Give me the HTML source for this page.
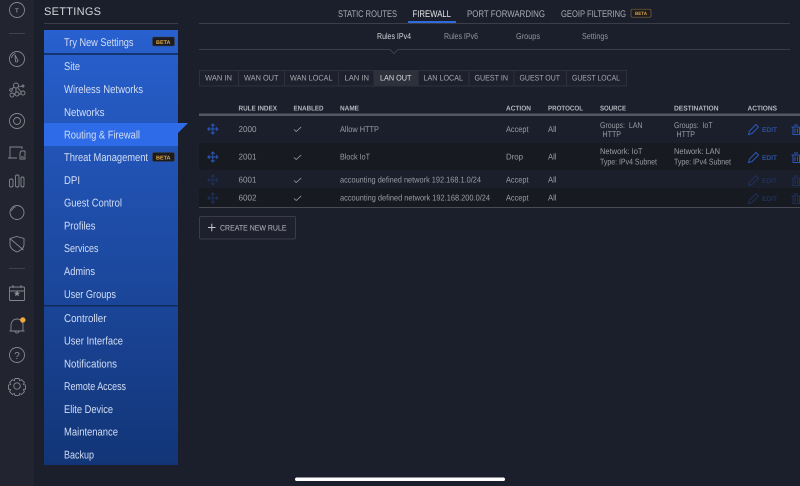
<!DOCTYPE html>
<html><head><meta charset="utf-8"><style>
html,body{margin:0;padding:0;background:#1b1e2b;width:800px;height:486px;overflow:hidden}
svg{display:block}
text{font-family:"Liberation Sans",sans-serif}
.m{font-size:11.2px;fill:#d3def5}
.t{font-size:9.6px;fill:#a9acb3}
.h{font-size:7px;font-weight:bold;fill:#b4b7bd}
.b{font-size:8px;fill:#a4a7ae}
.r{font-size:8.4px;fill:#9a9da4}
.i{fill:none;stroke:#85888f;stroke-width:.9}
.bl{fill:none;stroke:#2a58b8;stroke-width:1}
.bd{fill:none;stroke:#1e3159;stroke-width:1}
</style></head><body>
<svg width="800" height="486" viewBox="0 0 800 486" xmlns="http://www.w3.org/2000/svg" text-rendering="geometricPrecision">
<defs>
<linearGradient id="g" gradientUnits="userSpaceOnUse" x1="0" y1="30" x2="0" y2="465"><stop offset="0" stop-color="#2860cf"/><stop offset="1" stop-color="#123577"/></linearGradient>
</defs>
<rect width="800" height="486" fill="#1b1e2b"/>
<rect width="34" height="486" fill="#22252f"/>

<!-- left rail -->
<g class="i">
<circle cx="17" cy="10" r="7.5"/>
<path d="M9 33.500H25" stroke="#44474f"/>
<circle cx="17" cy="59" r="7.500"/><path d="M15 55l3 5.500a1.500 1.500 0 0 1-2.500 1zM11.500 58a6 6 0 0 1 4-4.500"/>
<circle cx="16" cy="85.500" r="2.500"/><circle cx="12" cy="95" r="2"/><circle cx="17" cy="94" r="2"/><circle cx="23" cy="93" r="2"/><circle cx="11" cy="90" r="1.300"/><circle cx="23" cy="86" r="1"/><path d="M16 88v4M14 94h1M19 94h2M14 87l-2 2M18 87l4-1M18 88l3 4"/>
<circle cx="17" cy="121" r="7.500"/><circle cx="17" cy="121" r="3.500"/>
<path d="M10 158v-11h12v2M8 158h9M21 151h4v8h-5v-6zM21 157h3"/>
<rect x="9.500" y="179" width="3.500" height="8" rx="1.500"/><rect x="15.500" y="175" width="3.500" height="12" rx="1.500"/><rect x="21" y="177" width="3" height="10" rx="1.500"/>
<circle cx="17" cy="212.500" r="7"/><path d="M11.500 211a6 6 0 0 1 4-4"/>
<path d="M17 236.500l7 2v6c0 3.500-3.500 6-7 7.500-3.500-1.500-7-4-7-7.500v-6zM10.500 239l13 11" />
<path d="M9 268.500H25" stroke="#44474f"/>
<rect x="9.500" y="287" width="15" height="13.500" rx="1"/><path d="M9.500 291h15M13 285v3M21 285v3"/>
<path d="M11 331v-6a6 6 0 0 1 12 0v6M9.500 331h15M15 331a2 2 0 0 0 4 0"/>
<circle cx="17" cy="355" r="7.500"/>
<circle cx="17" cy="386" r="3.200"/>
<path d="M15 378.500h4l.6 2.100 2-.9 2.800 2.800-1 2 2.100.6v4l-2.100.6 1 2-2.800 2.800-2-1-.6 2.100h-4l-.6-2.100-2 1-2.800-2.800 1-2-2.100-.6v-4l2.100-.6-1-2 2.800-2.800 2 .9z"/>
</g>
<text x="15" y="12.500" font-size="6" font-weight="bold" fill="#8b8e98">T</text>
<text x="14.300" y="358.800" font-size="10" fill="#8b8e98">?</text>
<path d="M17 290.500l.9 2 2.100.2-1.600 1.400.5 2.100-1.900-1.100-1.900 1.100.5-2.100-1.600-1.400 2.100-.2z" fill="#8b8e98"/>
<circle cx="22.800" cy="320" r="2.700" fill="#f0a93a"/>

<!-- settings menu -->
<text x="44" y="15" font-size="11" fill="#d5d7db" textLength="57" lengthAdjust="spacing">SETTINGS</text>
<rect x="44" y="23" width="134" height="1" fill="#3a3d46"/>
<rect x="44" y="30" width="134" height="435" fill="url(#g)"/>
<rect x="44" y="53" width="134" height="2" fill="#143470"/>
<rect x="44" y="305" width="134" height="1.500" fill="#102a5c"/>
<path d="M44 123H188L178 133V146H44z" fill="#2d6be8"/>

<g class="m">
<text x="64" y="45.800" textLength="69.500" lengthAdjust="spacingAndGlyphs">Try New Settings</text>
<text x="64" y="69.800" textLength="16" lengthAdjust="spacingAndGlyphs">Site</text>
<text x="64" y="92.800" textLength="79" lengthAdjust="spacingAndGlyphs">Wireless Networks</text>
<text x="64" y="115.800" textLength="40.500" lengthAdjust="spacingAndGlyphs">Networks</text>
<text x="64" y="138.300" textLength="76" lengthAdjust="spacingAndGlyphs">Routing &amp; Firewall</text>
<text x="64" y="160.800" textLength="84" lengthAdjust="spacingAndGlyphs">Threat Management</text>
<text x="64" y="183.800" textLength="16" lengthAdjust="spacingAndGlyphs">DPI</text>
<text x="64" y="206.300" textLength="58" lengthAdjust="spacingAndGlyphs">Guest Control</text>
<text x="64" y="229.300" textLength="31.500" lengthAdjust="spacingAndGlyphs">Profiles</text>
<text x="64" y="251.800" textLength="34.500" lengthAdjust="spacingAndGlyphs">Services</text>
<text x="64" y="274.800" textLength="31" lengthAdjust="spacingAndGlyphs">Admins</text>
<text x="64" y="297.800" textLength="52" lengthAdjust="spacingAndGlyphs">User Groups</text>
<text x="64" y="321.800" textLength="42.500" lengthAdjust="spacingAndGlyphs">Controller</text>
<text x="64" y="344.300" textLength="59" lengthAdjust="spacingAndGlyphs">User Interface</text>
<text x="64" y="367.300" textLength="53" lengthAdjust="spacingAndGlyphs">Notifications</text>
<text x="64" y="389.800" textLength="62" lengthAdjust="spacingAndGlyphs">Remote Access</text>
<text x="64" y="412.800" textLength="49" lengthAdjust="spacingAndGlyphs">Elite Device</text>
<text x="64" y="435.300" textLength="54" lengthAdjust="spacingAndGlyphs">Maintenance</text>
<text x="64" y="458.300" textLength="30" lengthAdjust="spacingAndGlyphs">Backup</text>
</g>
<rect x="152.500" y="37" width="22" height="9" rx="1.500" fill="#1b1c22" stroke="#3c3f4a" stroke-width=".6"/>
<text x="156" y="44" font-size="5.500" font-weight="bold" fill="#e0a840" textLength="14.500" lengthAdjust="spacingAndGlyphs">BETA</text>
<rect x="152.500" y="152.500" width="22" height="9" rx="1.500" fill="#1b1c22" stroke="#3c3f4a" stroke-width=".6"/>
<text x="156" y="159.500" font-size="5.500" font-weight="bold" fill="#e0a840" textLength="14.500" lengthAdjust="spacingAndGlyphs">BETA</text>

<!-- top tabs -->
<g class="t">
<text x="338" y="16.800" textLength="59" lengthAdjust="spacingAndGlyphs">STATIC ROUTES</text>
<text x="412.500" y="16.800" textLength="38.500" lengthAdjust="spacingAndGlyphs" style="fill:#e4e5e8">FIREWALL</text>
<text x="467" y="16.800" textLength="78" lengthAdjust="spacingAndGlyphs">PORT FORWARDING</text>
<text x="561" y="16.800" textLength="65" lengthAdjust="spacingAndGlyphs">GEOIP FILTERING</text>
</g>
<rect x="631" y="9.200" width="20" height="8" rx="1.500" fill="#1d1c1f" stroke="#7d6537" stroke-width=".7"/>
<text x="635" y="15" font-size="4.800" font-weight="bold" fill="#d9a544" textLength="12" lengthAdjust="spacingAndGlyphs">BETA</text>
<rect x="199" y="23" width="591" height="1" fill="#3b3e47"/>
<rect x="408" y="21" width="48" height="2" fill="#2f6bdc"/>

<!-- sub tabs -->
<text x="377" y="38.800" font-size="8.600" fill="#d5d6da" textLength="34" lengthAdjust="spacingAndGlyphs">Rules IPv4</text>
<text x="444" y="38.800" font-size="8.600" fill="#92959c" textLength="34" lengthAdjust="spacingAndGlyphs">Rules IPv6</text>
<text x="516" y="38.800" font-size="8.600" fill="#92959c" textLength="24" lengthAdjust="spacingAndGlyphs">Groups</text>
<text x="582" y="38.800" font-size="8.600" fill="#92959c" textLength="26" lengthAdjust="spacingAndGlyphs">Settings</text>
<path d="M199 49.500H390L394 53.500 398 49.500H790" fill="none" stroke="#3b3e47"/>

<!-- button group -->
<rect x="199.500" y="70.500" width="427" height="15.500" fill="#1e212d" stroke="#2e313c"/>
<rect x="374" y="70" width="44" height="16" fill="#2e313c"/>
<path d="M238.500 70.500v16M284.500 70.500v16M338.500 70.500v16M374 70.500v16M418 70.500v16M469 70.500v16M514 70.500v16M566.500 70.500v16" stroke="#2e313c" fill="none"/>
<g class="b">
<text x="205" y="80.700" textLength="27" lengthAdjust="spacingAndGlyphs">WAN IN</text>
<text x="244" y="80.700" textLength="34.500" lengthAdjust="spacingAndGlyphs">WAN OUT</text>
<text x="290" y="80.700" textLength="42.500" lengthAdjust="spacingAndGlyphs">WAN LOCAL</text>
<text x="344.500" y="80.700" textLength="24.500" lengthAdjust="spacingAndGlyphs">LAN IN</text>
<text x="380" y="80.700" textLength="31.500" lengthAdjust="spacingAndGlyphs" style="fill:#d8d9dd">LAN OUT</text>
<text x="423.500" y="80.700" textLength="39.500" lengthAdjust="spacingAndGlyphs">LAN LOCAL</text>
<text x="474.500" y="80.700" textLength="33.500" lengthAdjust="spacingAndGlyphs">GUEST IN</text>
<text x="519.500" y="80.700" textLength="40.500" lengthAdjust="spacingAndGlyphs">GUEST OUT</text>
<text x="572" y="80.700" textLength="48" lengthAdjust="spacingAndGlyphs">GUEST LOCAL</text>
</g>

<!-- table -->
<g class="h">
<text x="238.500" y="110.500" textLength="38.500" lengthAdjust="spacingAndGlyphs">RULE INDEX</text>
<text x="293.500" y="110.500" textLength="30" lengthAdjust="spacingAndGlyphs">ENABLED</text>
<text x="340" y="110.500" textLength="19" lengthAdjust="spacingAndGlyphs">NAME</text>
<text x="506" y="110.500" textLength="25" lengthAdjust="spacingAndGlyphs">ACTION</text>
<text x="548" y="110.500" textLength="35" lengthAdjust="spacingAndGlyphs">PROTOCOL</text>
<text x="600" y="110.500" textLength="26" lengthAdjust="spacingAndGlyphs">SOURCE</text>
<text x="674" y="110.500" textLength="44.500" lengthAdjust="spacingAndGlyphs">DESTINATION</text>
<text x="747.500" y="110.500" textLength="29.500" lengthAdjust="spacingAndGlyphs">ACTIONS</text>
</g>
<rect x="199" y="113.500" width="601" height="2.500" fill="#545862"/>
<rect x="199" y="143" width="601" height="27" fill="#181a21"/>
<rect x="199" y="188" width="601" height="19" fill="#181a21"/>
<rect x="199" y="207" width="601" height="1" fill="#484b55"/>

<g class="r">
<text x="238.500" y="132.200" textLength="18" lengthAdjust="spacingAndGlyphs">2000</text>
<text x="238.500" y="159.700" textLength="18" lengthAdjust="spacingAndGlyphs">2001</text>
<text x="238.500" y="182.700" textLength="18" lengthAdjust="spacingAndGlyphs">6001</text>
<text x="238.500" y="200.700" textLength="18" lengthAdjust="spacingAndGlyphs">6002</text>
<text x="340" y="132.200" textLength="39" lengthAdjust="spacingAndGlyphs">Allow HTTP</text>
<text x="340" y="159.700" textLength="30" lengthAdjust="spacingAndGlyphs">Block IoT</text>
<text x="340" y="182.700" textLength="141" lengthAdjust="spacingAndGlyphs">accounting defined network 192.168.1.0/24</text>
<text x="340" y="200.700" textLength="150" lengthAdjust="spacingAndGlyphs">accounting defined network 192.168.200.0/24</text>
<text x="506" y="132.200" textLength="22.500" lengthAdjust="spacingAndGlyphs">Accept</text>
<text x="506" y="159.700" textLength="17" lengthAdjust="spacingAndGlyphs">Drop</text>
<text x="506" y="182.700" textLength="22.500" lengthAdjust="spacingAndGlyphs">Accept</text>
<text x="506" y="200.700" textLength="22.500" lengthAdjust="spacingAndGlyphs">Accept</text>
<text x="548" y="132.200" textLength="8.500" lengthAdjust="spacingAndGlyphs">All</text>
<text x="548" y="159.700" textLength="8.500" lengthAdjust="spacingAndGlyphs">All</text>
<text x="548" y="182.700" textLength="8.500" lengthAdjust="spacingAndGlyphs">All</text>
<text x="548" y="200.700" textLength="8.500" lengthAdjust="spacingAndGlyphs">All</text>
<text x="600" y="128" textLength="42.500" lengthAdjust="spacingAndGlyphs" xml:space="preserve">Groups:  LAN</text>
<text x="602.500" y="136.800" textLength="18.500" lengthAdjust="spacingAndGlyphs">HTTP</text>
<text x="674" y="128" textLength="38.500" lengthAdjust="spacingAndGlyphs" xml:space="preserve">Groups:  IoT</text>
<text x="676.500" y="136.800" textLength="18.500" lengthAdjust="spacingAndGlyphs">HTTP</text>
<text x="600" y="154.200" textLength="42.500" lengthAdjust="spacingAndGlyphs">Network: IoT</text>
<text x="600" y="164.700" textLength="57" lengthAdjust="spacingAndGlyphs">Type: IPv4 Subnet</text>
<text x="674" y="154.200" textLength="46" lengthAdjust="spacingAndGlyphs">Network: LAN</text>
<text x="674" y="164.700" textLength="57" lengthAdjust="spacingAndGlyphs">Type: IPv4 Subnet</text>
</g>

<!-- checks -->
<path d="M294 129.500l2.200 2 5-4.500M294 157.500l2.200 2 5-4.500M294 180.500l2.200 2 5-4.500M294 198.500l2.200 2 5-4.500" fill="none" stroke="#a0a3aa" stroke-width=".8"/>

<!-- move icons -->
<g class="bl">
<path d="M208 129h9.500M212.800 124.200v9.500M211 125.800l1.800-1.800 1.800 1.800M211 132.200l1.800 1.800 1.800-1.800M209.600 127.200l-1.800 1.800 1.800 1.800M216 127.200l1.800 1.800-1.800 1.800"/>
<path transform="translate(0 28)" d="M208 129h9.500M212.800 124.200v9.500M211 125.800l1.800-1.800 1.800 1.800M211 132.200l1.800 1.800 1.800-1.800M209.600 127.200l-1.800 1.800 1.800 1.800M216 127.200l1.800 1.800-1.800 1.800"/>
</g>
<g class="bd">
<path transform="translate(0 51)" d="M208 129h9.500M212.800 124.200v9.500M211 125.800l1.800-1.800 1.800 1.800M211 132.200l1.800 1.800 1.800-1.800M209.600 127.200l-1.800 1.800 1.800 1.800M216 127.200l1.800 1.800-1.800 1.800"/>
<path transform="translate(0 69)" d="M208 129h9.500M212.800 124.200v9.500M211 125.800l1.800-1.800 1.800 1.800M211 132.200l1.800 1.800 1.800-1.800M209.600 127.200l-1.800 1.800 1.800 1.800M216 127.200l1.800 1.800-1.800 1.800"/>
</g>

<!-- edit / delete -->
<g class="bl">
<path d="M748.500 134.500l1-3.500 6.500-6.500 2.500 2.500-6.500 6.500z"/>
<path d="M791.500 127h8M793 127v7.500h6.500V127M794 125h4M795 128.500v4.500M797.500 128.500v4.500"/>
<path transform="translate(0 28)" d="M748.500 134.500l1-3.500 6.500-6.500 2.500 2.500-6.500 6.500z"/>
<path transform="translate(0 28)" d="M791.500 127h8M793 127v7.500h6.500V127M794 125h4M795 128.500v4.500M797.500 128.500v4.500"/>
</g>
<g class="bd">
<path transform="translate(0 51)" d="M748.500 134.500l1-3.500 6.500-6.500 2.500 2.500-6.500 6.500z"/>
<path transform="translate(0 51)" d="M791.500 127h8M793 127v7.500h6.500V127M794 125h4M795 128.500v4.500M797.500 128.500v4.500"/>
<path transform="translate(0 69)" d="M748.500 134.500l1-3.500 6.500-6.500 2.500 2.500-6.500 6.500z"/>
<path transform="translate(0 69)" d="M791.500 127h8M793 127v7.500h6.500V127M794 125h4M795 128.500v4.500M797.500 128.500v4.500"/>
</g>
<text x="762" y="131.800" font-size="7" font-weight="bold" fill="#27519f" textLength="15" lengthAdjust="spacingAndGlyphs">EDIT</text>
<text x="762" y="159.800" font-size="7" font-weight="bold" fill="#27519f" textLength="15" lengthAdjust="spacingAndGlyphs">EDIT</text>
<text x="762" y="182.800" font-size="7" font-weight="bold" fill="#1e3159" textLength="15" lengthAdjust="spacingAndGlyphs">EDIT</text>
<text x="762" y="200.800" font-size="7" font-weight="bold" fill="#1e3159" textLength="15" lengthAdjust="spacingAndGlyphs">EDIT</text>

<!-- create button -->
<rect x="199.500" y="216.500" width="96" height="22.500" rx="1.500" fill="#1e212d" stroke="#3a3d48"/>
<path d="M208 227.500h7.500M211.800 223.700v7.500" stroke="#c4c6cb" stroke-width="1" fill="none"/>
<text x="220" y="230.300" font-size="7.800" fill="#b8bac0" textLength="66.500" lengthAdjust="spacingAndGlyphs">CREATE NEW RULE</text>

<!-- home indicator -->
<rect x="295" y="477.500" width="210" height="3.500" rx="1.750" fill="#ffffff"/>
</svg>
</body></html>
